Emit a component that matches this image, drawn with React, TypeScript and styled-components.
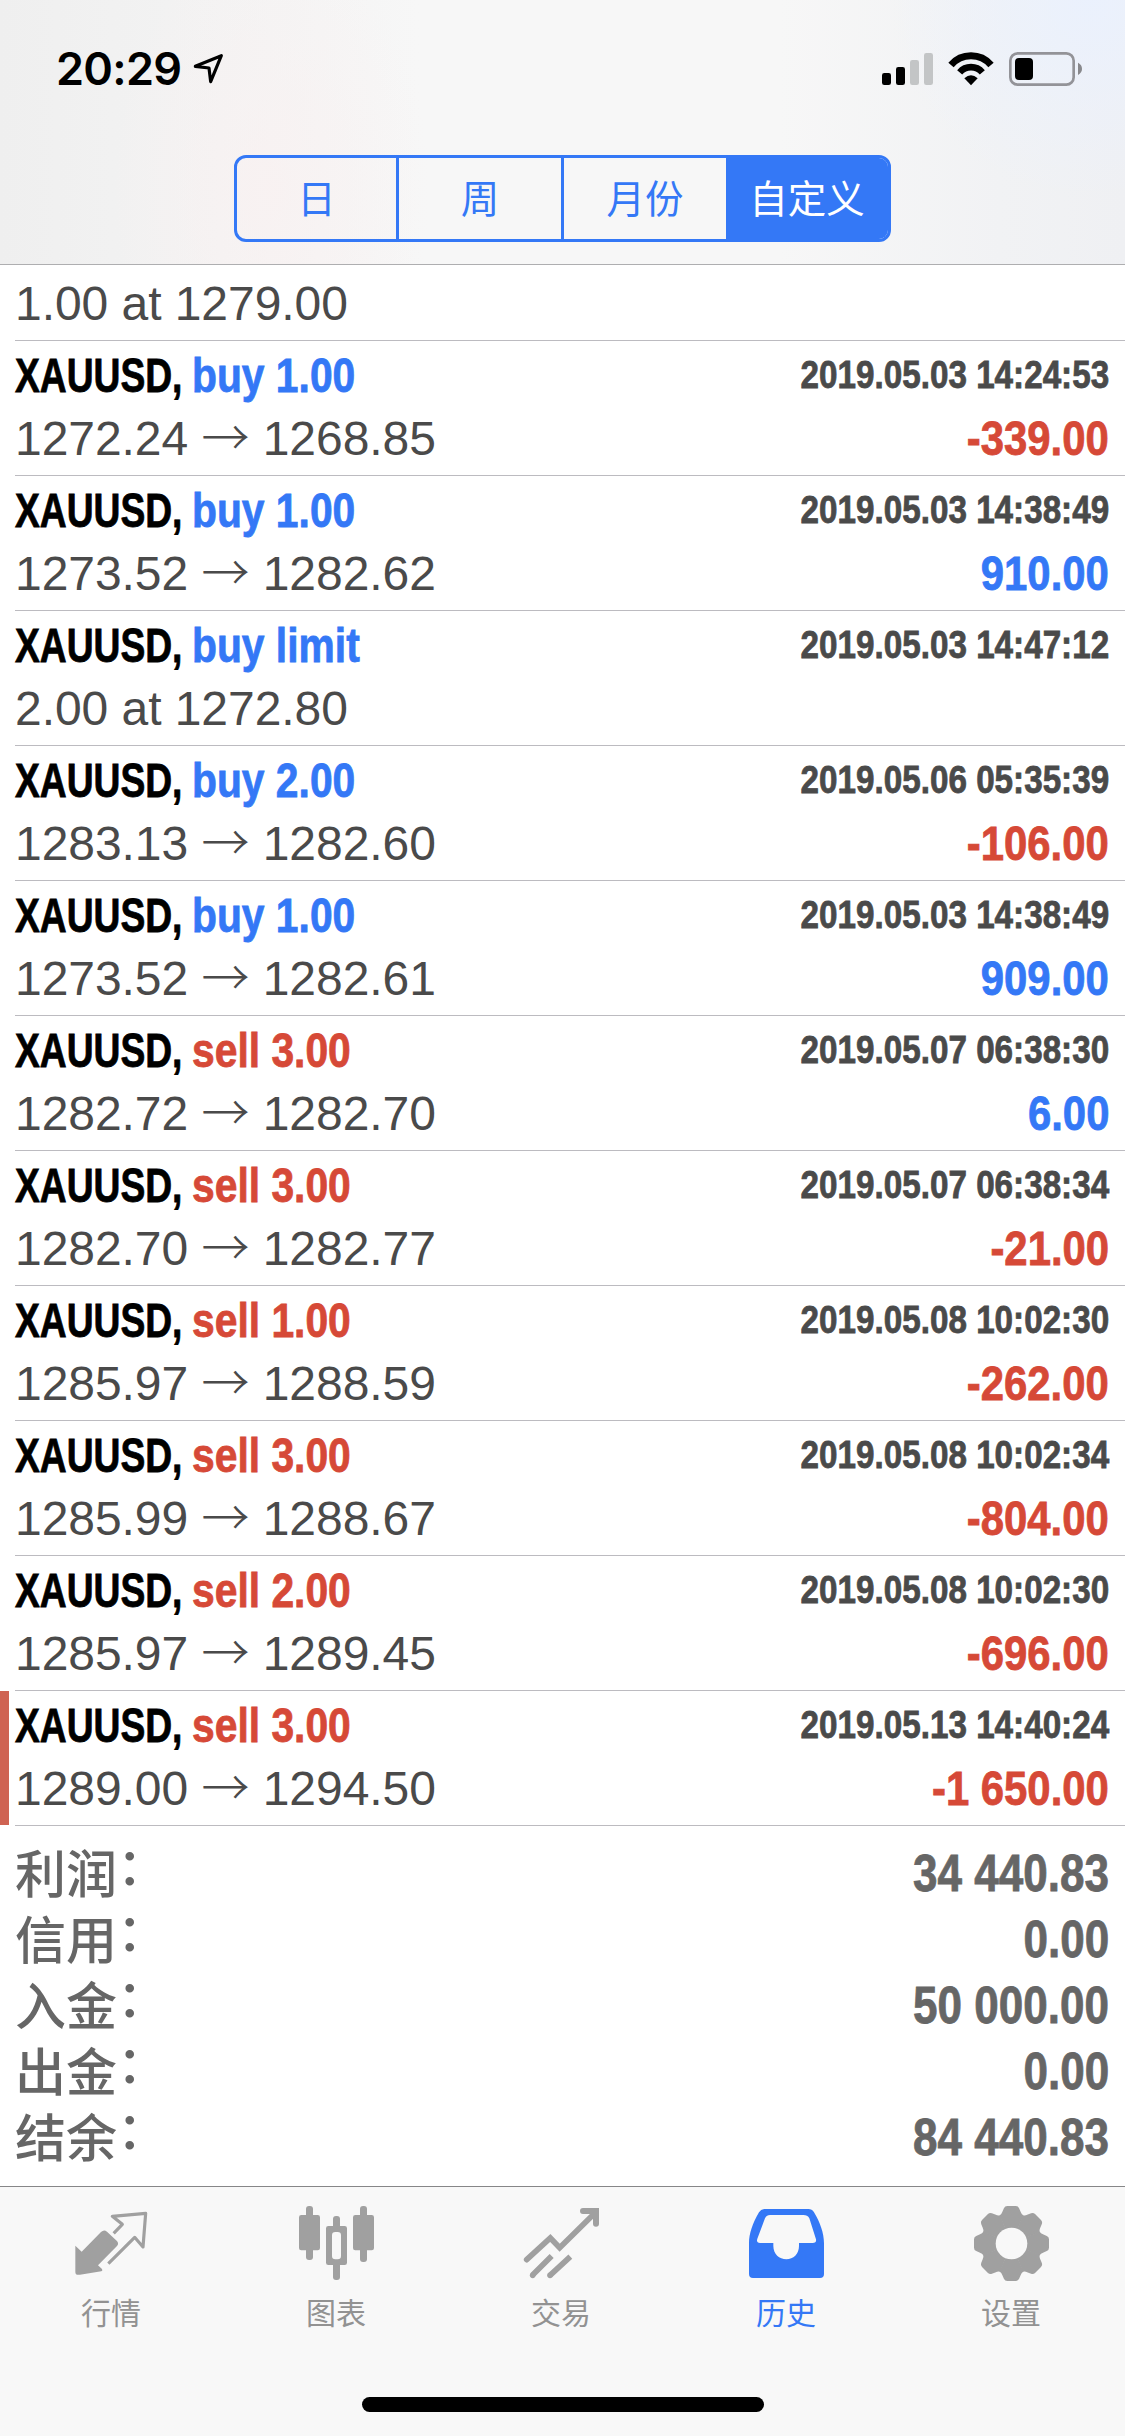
import React from 'react';
import styled, { createGlobalStyle } from 'styled-components';

const BLUE = '#3478f6';
const RED = '#d64937';
const SANS = '"Liberation Sans", "Noto Sans CJK SC", Arial, sans-serif';
const CJK = '"Noto Sans CJK SC", "Liberation Sans", sans-serif';

const GlobalStyle = createGlobalStyle`
  * { box-sizing: border-box; }
  body { margin: 0; background: #fff; font-family: ${SANS}; }
`;

const Screen = styled.div`
  width: 1125px;
  height: 2436px;
  display: flex;
  flex-direction: column;
  overflow: hidden;
  background: #fff;
`;

const Header = styled.header`
  height: 265px;
  flex: none;
  display: flex;
  flex-direction: column;
  align-items: center;
  border-bottom: 1px solid #aeaeb0;
  background:
    radial-gradient(circle 200px at 1090px 0, rgba(234, 241, 254, 0.9), rgba(234, 241, 254, 0)),
    radial-gradient(ellipse 160px 260px at 270px 190px, rgba(249, 241, 241, 0.8), rgba(249, 241, 241, 0)),
    linear-gradient(90deg, #efefef 0, #f2f2f2 170px, #f7f7f7 420px, #f7f7f7 780px, #f1f2f4 1000px, #eff0f3 100%);
`;

const StatusBar = styled.div`
  width: 100%;
  height: 155px;
  flex: none;
  display: flex;
  align-items: flex-start;
  justify-content: space-between;
  padding: 50px 42px 0 56px;
`;

const StatusGroup = styled.div<{ $gap: number; $top: number }>`
  display: flex;
  align-items: flex-start;
  gap: ${p => p.$gap}px;
  padding-top: ${p => p.$top}px;
`;

const Clock = styled.span`
  width: 134px;
  white-space: nowrap;
  font: 600 45px/38px Inter, sans-serif;
  letter-spacing: -0.7px;
  color: #000;
`;

const Segments = styled.div`
  width: 657px;
  height: 87px;
  display: grid;
  grid-template-columns: 162px 165px 162px 162px;
  border: 3px solid ${BLUE};
  border-radius: 12px;
  overflow: hidden;
`;

const Segment = styled.div<{ $active?: boolean; $divider?: boolean }>`
  display: flex;
  align-items: center;
  justify-content: center;
  font: 400 38.5px/77px ${CJK};
  height: 77px;
  box-sizing: content-box;
  padding-bottom: 4px;
  border-right: ${p => (p.$divider ? `3px solid ${BLUE}` : '0')};
  background: ${p => (p.$active ? BLUE : 'transparent')};
  color: ${p => (p.$active ? '#fff' : BLUE)};
`;

const List = styled.main`
  flex: 1;
  display: flex;
  flex-direction: column;
  min-height: 0;
`;

const Row = styled.div<{ $height?: number }>`
  display: flex;
  flex: none;
  height: ${p => p.$height ?? 135}px;
`;

const Marker = styled.div<{ $on?: boolean }>`
  width: 9px;
  margin-right: 6px;
  flex: none;
  margin-bottom: 1px;
  background: ${p => (p.$on ? '#cf6353' : 'transparent')};
`;

const RowBody = styled.div`
  flex: 1;
  display: flex;
  flex-direction: column;
  justify-content: flex-end;
  padding: 0 16px 5px 0;
  border-bottom: 1px solid #bcbbc0;
`;

const Line = styled.div`
  height: 63px;
  flex: none;
  display: flex;
  justify-content: space-between;
  line-height: 63px;
  white-space: nowrap;
  font-size: 48px;
`;

const Title = styled.div`
  display: flex;
`;

const Condensed = styled.span<{ $scale: number; $right?: boolean }>`
  display: inline-block;
  font-weight: 700;
  white-space: nowrap;
  -webkit-text-stroke: 0.8px currentColor;
  transform: scaleX(${p => p.$scale});
  transform-origin: ${p => (p.$right ? 'right' : 'left')} center;
`;

const SymbolName = styled(Condensed)`
  width: 177px;
  color: #000;
`;

const Side = styled(Condensed)<{ $sell: boolean }>`
  color: ${p => (p.$sell ? RED : BLUE)};
`;

const Time = styled(Condensed)`
  font-size: 39px;
  line-height: 62px;
  color: #4a4a4a;
`;

const Prices = styled.span`
  color: #4a4a4a;
  letter-spacing: -0.05px;
`;

const Arrow = styled.span`
  font-family: "Noto Sans CJK SC", sans-serif;
  font-weight: 300;
  line-height: 1;
`;

const Profit = styled(Condensed)<{ $loss: boolean }>`
  color: ${p => (p.$loss ? RED : BLUE)};
`;

const Summary = styled.div`
  padding: 15px 16px 0 15px;
`;

const SummaryLine = styled.div`
  height: 66px;
  display: flex;
  justify-content: space-between;
  color: #666;
  font-size: 51px;
  line-height: 66px;
  white-space: nowrap;
`;

const SummaryLabel = styled.span`
  display: flex;
  margin-top: -3px;
  font-family: ${CJK};
  font-weight: 500;
`;

const Colon = styled.span`
  margin-top: -8px;
`;

const TabBar = styled.nav`
  height: 250px;
  flex: none;
  display: flex;
  flex-direction: column;
  align-items: center;
  border-top: 1px solid #868688;
  background: #f8f8f8;
`;

const Tabs = styled.div`
  width: 100%;
  height: 210px;
  flex: none;
  display: grid;
  grid-template-columns: repeat(5, 1fr);
`;

const Tab = styled.div<{ $active?: boolean }>`
  display: flex;
  flex-direction: column;
  align-items: center;
  padding-top: 15px;
  color: ${p => (p.$active ? BLUE : '#a0a0a0')};
`;

const TabLabel = styled.span<{ $active?: boolean }>`
  margin-top: 8px;
  padding-right: 3px;
  font: 400 30px/40px ${CJK};
  color: ${p => (p.$active ? BLUE : '#929292')};
`;

const HomeIndicator = styled.div`
  width: 402px;
  height: 15px;
  border-radius: 8px;
  background: #000;
`;

type Trade = { side: string; time: string; from?: string; to?: string; note?: string; profit?: string; marked?: boolean };

const trades: Trade[] = [
  { side: 'buy 1.00', time: '2019.05.03 14:24:53', from: '1272.24', to: '1268.85', profit: '-339.00' },
  { side: 'buy 1.00', time: '2019.05.03 14:38:49', from: '1273.52', to: '1282.62', profit: '910.00' },
  { side: 'buy limit', time: '2019.05.03 14:47:12', note: '2.00 at 1272.80' },
  { side: 'buy 2.00', time: '2019.05.06 05:35:39', from: '1283.13', to: '1282.60', profit: '-106.00' },
  { side: 'buy 1.00', time: '2019.05.03 14:38:49', from: '1273.52', to: '1282.61', profit: '909.00' },
  { side: 'sell 3.00', time: '2019.05.07 06:38:30', from: '1282.72', to: '1282.70', profit: '6.00' },
  { side: 'sell 3.00', time: '2019.05.07 06:38:34', from: '1282.70', to: '1282.77', profit: '-21.00' },
  { side: 'sell 1.00', time: '2019.05.08 10:02:30', from: '1285.97', to: '1288.59', profit: '-262.00' },
  { side: 'sell 3.00', time: '2019.05.08 10:02:34', from: '1285.99', to: '1288.67', profit: '-804.00' },
  { side: 'sell 2.00', time: '2019.05.08 10:02:30', from: '1285.97', to: '1289.45', profit: '-696.00' },
  { side: 'sell 3.00', time: '2019.05.13 14:40:24', from: '1289.00', to: '1294.50', profit: '-1 650.00', marked: true },
];

const totals = [
  ['利润', '34 440.83'],
  ['信用', '0.00'],
  ['入金', '50 000.00'],
  ['出金', '0.00'],
  ['结余', '84 440.83'],
];

const LocationIcon = () => (
  <svg width="36" height="36" viewBox="420 30 108 108" fill="none" stroke="#000" strokeWidth="9.5" strokeLinejoin="round">
    <path d="M436 79L514 47L482 125L477 84Z" />
  </svg>
);

const SignalIcon = () => (
  <svg width="51" height="34" viewBox="36 36 153 102">
    <rect x="36" y="99" width="27" height="36" rx="7" />
    <rect x="78" y="81" width="27" height="54" rx="7" />
    <rect x="120" y="60" width="27" height="75" rx="7" fill="#c3c5c6" />
    <rect x="162" y="39" width="27" height="96" rx="7" fill="#c3c5c6" />
  </svg>
);

const WifiIcon = () => (
  <svg width="46" height="34" viewBox="234 36 138 102" fill="none" stroke="#000">
    <path d="M243 75A79 79 0 0 1 363 75" strokeWidth="21" />
    <path d="M269 97A45 45 0 0 1 337 97" strokeWidth="20" />
    <path d="M303 136L283 115Q303 97 323 115Z" fill="#000" stroke="none" />
  </svg>
);

const BatteryIcon = () => (
  <svg width="74" height="34" viewBox="417 36 222 102">
    <rect x="421" y="40" width="190" height="94" rx="22" fill="none" stroke="#939398" strokeWidth="8" />
    <rect x="435" y="54" width="54" height="66" rx="12" />
    <path d="M624 68Q636 74 636 86T624 105Z" fill="#88888c" />
  </svg>
);

const QuotesIcon = () => (
  <svg width="81" height="81" viewBox="36 36 243 243">
    <path fill="currentColor" d="M46 167L65 185L123 126Q132 117 141 125L170 152Q178 160 171 168L114 226L126 237Q129 242 124 244L60 254Q46 257 46 245Z" />
    <path fill="none" stroke="currentColor" strokeWidth="9.5" strokeLinejoin="round" d="M161 130L187 103L157 79L257 70L249 171L224 142L145 221" />
  </svg>
);

const ChartIcon = () => (
  <svg width="81" height="81" viewBox="711 36 243 243" fill="currentColor">
    <rect x="717" y="75" width="63" height="106" rx="7" />
    <rect x="738" y="48" width="21" height="162" rx="9" />
    <rect x="879" y="75" width="63" height="106" rx="7" />
    <rect x="900" y="48" width="21" height="168" rx="9" />
    <rect x="819" y="78" width="21" height="45" rx="9" />
    <rect x="819" y="212" width="21" height="58" rx="9" />
    <path fillRule="evenodd" d="M805 108H854Q861 108 861 115V218Q861 225 854 225H805Q798 225 798 218V115Q798 108 805 108ZM826 126Q816 126 816 136V198Q816 208 826 208H833Q843 208 843 198V136Q843 126 833 126Z" />
  </svg>
);

const TradeIcon = () => (
  <svg width="81" height="81" viewBox="36 36 243 243" fill="none" stroke="currentColor" strokeWidth="17">
    <path d="M50 209L121 144L149 173L254 70" strokeLinecap="round" />
    <path d="M219 63H258V101" strokeLinecap="round" strokeWidth="18" />
    <path d="M67 256L125 198M120 256L181 200" />
    <circle cx="68" cy="256" r="8.5" fill="currentColor" stroke="none" />
    <circle cx="120" cy="256" r="8.5" fill="currentColor" stroke="none" />
  </svg>
);

const HistoryIcon = () => (
  <svg width="81" height="81" viewBox="711 36 243 243">
    <path
      fill="currentColor"
      fillRule="evenodd"
      d="M764 57H895Q906 57 912 67C930 96 942 130 942 160V252Q942 264 930 264H729Q717 264 717 252V160C717 130 728 100 747 67Q753 57 764 57ZM780 75Q770 75 765 85L742 146Q738 159 750 159H790V168C790 192 808 208 829 208C850 208 867 192 867 168V159H908Q920 159 918 148L898 85Q893 75 880 75Z"
    />
  </svg>
);

const SettingsIcon = () => (
  <svg width="81" height="81" viewBox="-39.5 -41.5 81 81" fill="currentColor">
    {[0, 45, 90, 135, 180, 225, 270, 315].map(a => (
      <path key={a} transform={`rotate(${a})`} d="M0 0L-12 -28Q-10 -29 -9 -32L-7.6 -35.3Q-6.6 -37.5 -4.2 -37.5H4.2Q6.6 -37.5 7.6 -35.3L9 -32Q10 -29 12 -28Z" />
    ))}
    <circle r="15.8" fill="#f8f8f8" />
  </svg>
);

const tabs = [
  { label: '行情', Icon: QuotesIcon },
  { label: '图表', Icon: ChartIcon },
  { label: '交易', Icon: TradeIcon },
  { label: '历史', Icon: HistoryIcon, active: true },
  { label: '设置', Icon: SettingsIcon },
];

const TradeRow = ({ trade }: { trade: Trade }) => (
  <Row>
    <Marker $on={trade.marked} />
    <RowBody>
      <Line>
        <Title>
          <SymbolName $scale={0.775}>XAUUSD,</SymbolName>
          <Side $scale={0.85} $sell={trade.side.startsWith('sell')}>{trade.side}</Side>
        </Title>
        <Time $scale={0.852} $right>{trade.time}</Time>
      </Line>
      <Line>
        <Prices>{trade.note ?? <>{trade.from} <Arrow>→</Arrow> {trade.to}</>}</Prices>
        {trade.profit && <Profit $scale={0.872} $right $loss={trade.profit.startsWith('-')}>{trade.profit}</Profit>}
      </Line>
    </RowBody>
  </Row>
);

export default function App() {
  return (
    <Screen>
      <GlobalStyle />
      <Header>
        <StatusBar>
          <StatusGroup $gap={0} $top={0}>
            <Clock>20:29</Clock>
            <LocationIcon />
          </StatusGroup>
          <StatusGroup $gap={15} $top={2}>
            <SignalIcon />
            <WifiIcon />
            <BatteryIcon />
          </StatusGroup>
        </StatusBar>
        <Segments>
          <Segment $divider>日</Segment>
          <Segment $divider>周</Segment>
          <Segment>月份</Segment>
          <Segment $active>自定义</Segment>
        </Segments>
      </Header>
      <List>
        <Row $height={76}>
          <Marker />
          <RowBody>
            <Line><Prices>1.00 at 1279.00</Prices></Line>
          </RowBody>
        </Row>
        {trades.map((t, i) => <TradeRow key={i} trade={t} />)}
        <Summary>
          {totals.map(([label, value]) => (
            <SummaryLine key={label}>
              <SummaryLabel>{label}<Colon>：</Colon></SummaryLabel>
              <Condensed $scale={0.863} $right>{value}</Condensed>
            </SummaryLine>
          ))}
        </Summary>
      </List>
      <TabBar>
        <Tabs>
          {tabs.map(({ label, Icon, active }) => (
            <Tab key={label} $active={active}>
              <Icon />
              <TabLabel $active={active}>{label}</TabLabel>
            </Tab>
          ))}
        </Tabs>
        <HomeIndicator />
      </TabBar>
    </Screen>
  );
}
